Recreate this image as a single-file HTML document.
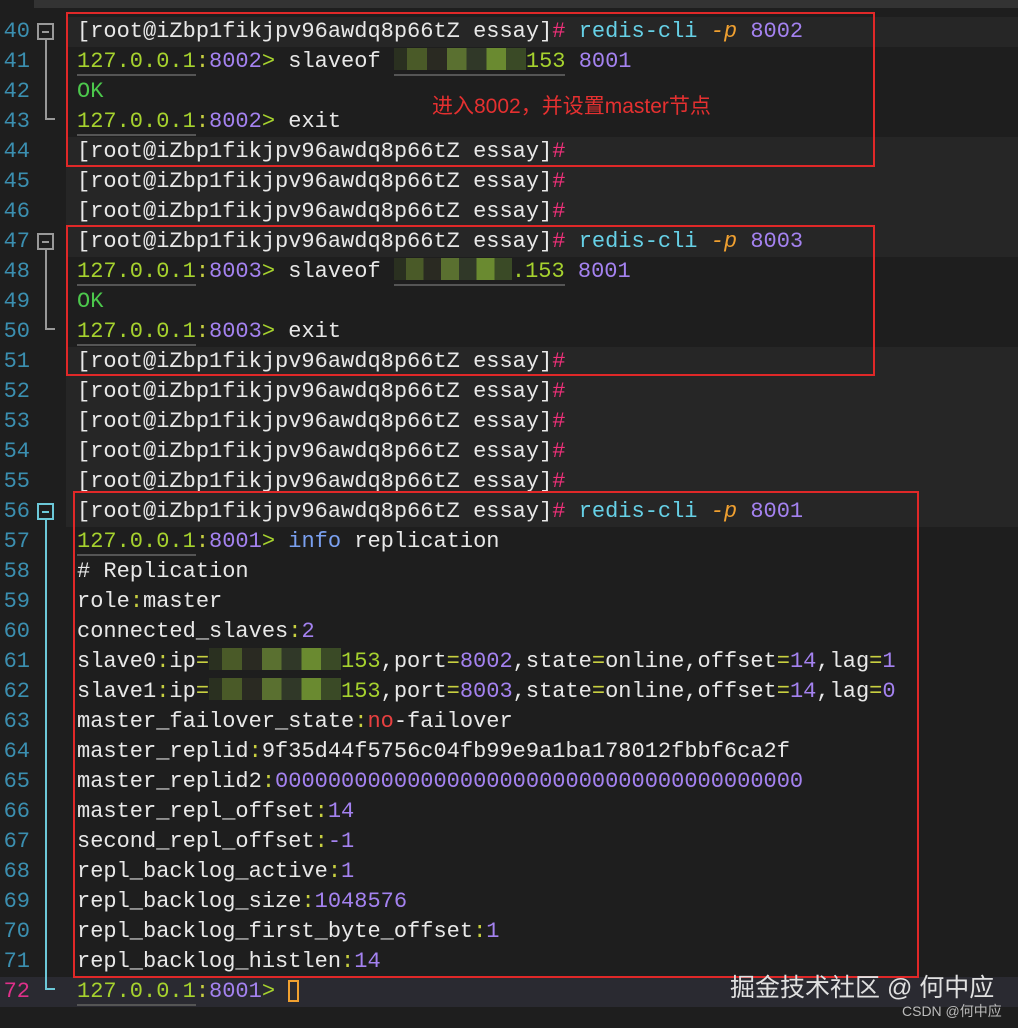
<!DOCTYPE html>
<html><head><meta charset="utf-8"><style>
html,body{margin:0;padding:0;background:#1e1e1e;width:1018px;height:1028px;overflow:hidden;position:relative;font-family:"Liberation Mono","DejaVu Sans Mono",monospace;}
.top{position:absolute;left:34px;top:0;width:984px;height:8px;background:#333;}
.ln{position:absolute;left:0;width:30px;text-align:right;font-size:22px;line-height:30px;color:#3b8fb0;}
.row{position:absolute;left:77px;font-size:22px;line-height:30px;color:#e8e8e8;white-space:pre;}
.hl{position:absolute;left:66px;width:952px;height:30px;background:#262626;}
.w{color:#e8e8e8}.g{color:#a6d22e}.p{color:#a482f0}.pk{color:#f0307a}.c{color:#66d0e6}.o{color:#f0a030;font-style:italic}.y{color:#c8d040}.b{color:#7aa0f0}.r{color:#e84040}
.ip{border-bottom:2px solid #555;}
.m{display:inline-block;height:22px;vertical-align:-3px;background:linear-gradient(90deg,#2a3020 0,#2a3020 10%,#4a5a28 10%,#4a5a28 25%,#2a2a22 25%,#2a2a22 40%,#5a7030 40%,#5a7030 55%,#303828 55%,#303828 70%,#6a8a30 70%,#6a8a30 85%,#3a4a26 85%);}
.box{position:absolute;border:2px solid #e02828;box-sizing:border-box;}
.fold{position:absolute;left:37px;width:17px;height:17px;box-sizing:border-box;border:2px solid #999;}
.fold::after{content:"";position:absolute;left:3px;top:6px;width:7px;height:2px;background:#999;}
.fold.cy{border-color:#6cc8d8}.fold.cy::after{background:#6cc8d8}
.vl{position:absolute;left:45px;width:2px;background:#999;}
.hk{position:absolute;left:45px;width:10px;height:2px;background:#999;}
</style></head><body>
<div class="top"></div>
<div class="hl" style="top:17px"></div>
<div class="hl" style="top:137px"></div>
<div class="hl" style="top:167px"></div>
<div class="hl" style="top:197px"></div>
<div class="hl" style="top:227px"></div>
<div class="hl" style="top:347px"></div>
<div class="hl" style="top:377px"></div>
<div class="hl" style="top:407px"></div>
<div class="hl" style="top:437px"></div>
<div class="hl" style="top:467px"></div>
<div class="hl" style="top:497px"></div>
<div style="position:absolute;left:0;top:977px;width:1018px;height:30px;background:#2a2a31"></div>

<div class="ln" style="top:17px">40</div><div class="ln" style="top:47px">41</div><div class="ln" style="top:77px">42</div><div class="ln" style="top:107px">43</div><div class="ln" style="top:137px">44</div><div class="ln" style="top:167px">45</div><div class="ln" style="top:197px">46</div><div class="ln" style="top:227px">47</div><div class="ln" style="top:257px">48</div><div class="ln" style="top:287px">49</div><div class="ln" style="top:317px">50</div><div class="ln" style="top:347px">51</div><div class="ln" style="top:377px">52</div><div class="ln" style="top:407px">53</div><div class="ln" style="top:437px">54</div><div class="ln" style="top:467px">55</div><div class="ln" style="top:497px">56</div><div class="ln" style="top:527px">57</div><div class="ln" style="top:557px">58</div><div class="ln" style="top:587px">59</div><div class="ln" style="top:617px">60</div><div class="ln" style="top:647px">61</div><div class="ln" style="top:677px">62</div><div class="ln" style="top:707px">63</div><div class="ln" style="top:737px">64</div><div class="ln" style="top:767px">65</div><div class="ln" style="top:797px">66</div><div class="ln" style="top:827px">67</div><div class="ln" style="top:857px">68</div><div class="ln" style="top:887px">69</div><div class="ln" style="top:917px">70</div><div class="ln" style="top:947px">71</div><div class="ln" style="top:977px;color:#e0308a">72</div>

<div class="fold" style="top:23px"></div><div class="vl" style="top:40px;height:80px"></div><div class="hk" style="top:118px"></div>
<div class="fold" style="top:233px"></div><div class="vl" style="top:250px;height:80px"></div><div class="hk" style="top:328px"></div>
<div class="fold cy" style="top:503px"></div><div class="vl" style="top:520px;height:470px;background:#6cc8d8"></div><div class="hk" style="top:988px;background:#6cc8d8"></div>

<div class="row" style="top:17px">[root@iZbp1fikjpv96awdq8p66tZ essay]<span class="pk">#</span> <span class="c">redis-cli</span> <span class="o">-p</span> <span class="p">8002</span></div>
<div class="row" style="top:47px"><span class="g ip">127.0.0.1</span><span class="y">:</span><span class="p">8002</span><span class="g">&gt;</span> slaveof <span class="ip"><span class="m" style="width:132px"></span><span class="g">153</span></span> <span class="p">8001</span></div>
<div class="row" style="top:77px"><span style="color:#4cc84c">OK</span></div>
<div class="row" style="top:107px"><span class="g ip">127.0.0.1</span><span class="y">:</span><span class="p">8002</span><span class="g">&gt;</span> exit</div>
<div class="row" style="top:137px">[root@iZbp1fikjpv96awdq8p66tZ essay]<span class="pk">#</span></div>
<div class="row" style="top:167px">[root@iZbp1fikjpv96awdq8p66tZ essay]<span class="pk">#</span></div>
<div class="row" style="top:197px">[root@iZbp1fikjpv96awdq8p66tZ essay]<span class="pk">#</span></div>
<div class="row" style="top:227px">[root@iZbp1fikjpv96awdq8p66tZ essay]<span class="pk">#</span> <span class="c">redis-cli</span> <span class="o">-p</span> <span class="p">8003</span></div>
<div class="row" style="top:257px"><span class="g ip">127.0.0.1</span><span class="y">:</span><span class="p">8003</span><span class="g">&gt;</span> slaveof <span class="ip"><span class="m" style="width:118px"></span><span class="g">.153</span></span> <span class="p">8001</span></div>
<div class="row" style="top:287px"><span style="color:#4cc84c">OK</span></div>
<div class="row" style="top:317px"><span class="g ip">127.0.0.1</span><span class="y">:</span><span class="p">8003</span><span class="g">&gt;</span> exit</div>
<div class="row" style="top:347px">[root@iZbp1fikjpv96awdq8p66tZ essay]<span class="pk">#</span></div>
<div class="row" style="top:377px">[root@iZbp1fikjpv96awdq8p66tZ essay]<span class="pk">#</span></div>
<div class="row" style="top:407px">[root@iZbp1fikjpv96awdq8p66tZ essay]<span class="pk">#</span></div>
<div class="row" style="top:437px">[root@iZbp1fikjpv96awdq8p66tZ essay]<span class="pk">#</span></div>
<div class="row" style="top:467px">[root@iZbp1fikjpv96awdq8p66tZ essay]<span class="pk">#</span></div>
<div class="row" style="top:497px">[root@iZbp1fikjpv96awdq8p66tZ essay]<span class="pk">#</span> <span class="c">redis-cli</span> <span class="o">-p</span> <span class="p">8001</span></div>
<div class="row" style="top:527px"><span class="g ip">127.0.0.1</span><span class="y">:</span><span class="p">8001</span><span class="g">&gt;</span> <span class="b">info</span> replication</div>
<div class="row" style="top:557px"># Replication</div>
<div class="row" style="top:587px">role<span class="y">:</span>master</div>
<div class="row" style="top:617px">connected_slaves<span class="y">:</span><span class="p">2</span></div>
<div class="row" style="top:647px">slave0<span class="y">:</span>ip<span class="y">=</span><span class="m" style="width:132px"></span><span class="g">153</span>,port<span class="y">=</span><span class="p">8002</span>,state<span class="y">=</span>online,offset<span class="y">=</span><span class="p">14</span>,lag<span class="y">=</span><span class="p">1</span></div>
<div class="row" style="top:677px">slave1<span class="y">:</span>ip<span class="y">=</span><span class="m" style="width:132px"></span><span class="g">153</span>,port<span class="y">=</span><span class="p">8003</span>,state<span class="y">=</span>online,offset<span class="y">=</span><span class="p">14</span>,lag<span class="y">=</span><span class="p">0</span></div>
<div class="row" style="top:707px">master_failover_state<span class="y">:</span><span class="r">no</span>-failover</div>
<div class="row" style="top:737px">master_replid<span class="y">:</span>9f35d44f5756c04fb99e9a1ba178012fbbf6ca2f</div>
<div class="row" style="top:767px">master_replid2<span class="y">:</span><span class="p">0000000000000000000000000000000000000000</span></div>
<div class="row" style="top:797px">master_repl_offset<span class="y">:</span><span class="p">14</span></div>
<div class="row" style="top:827px">second_repl_offset<span class="y">:</span><span class="p">-1</span></div>
<div class="row" style="top:857px">repl_backlog_active<span class="y">:</span><span class="p">1</span></div>
<div class="row" style="top:887px">repl_backlog_size<span class="y">:</span><span class="p">1048576</span></div>
<div class="row" style="top:917px">repl_backlog_first_byte_offset<span class="y">:</span><span class="p">1</span></div>
<div class="row" style="top:947px">repl_backlog_histlen<span class="y">:</span><span class="p">14</span></div>
<div class="row" style="top:977px"><span class="g ip">127.0.0.1</span><span class="y">:</span><span class="p">8001</span><span class="g">&gt;</span> <span style="display:inline-block;width:11px;height:22px;border:2px solid #f0a030;vertical-align:-5px;box-sizing:border-box"></span></div>

<div class="box" style="left:66px;top:12px;width:809px;height:155px"></div>
<div class="box" style="left:66px;top:225px;width:809px;height:151px"></div>
<div class="box" style="left:73px;top:491px;width:846px;height:487px"></div>

<div style="position:absolute;left:432px;top:90px;font-family:'Liberation Sans','Noto Sans CJK SC',sans-serif;font-size:21px;color:#e53030;white-space:nowrap">进入8002，并设置master节点</div>
<div style="position:absolute;left:730px;top:968px;font-family:'Liberation Sans','Noto Sans CJK SC',sans-serif;font-size:25px;color:#e0e0e0;white-space:nowrap">掘金技术社区 @ 何中应</div>
<div style="position:absolute;left:902px;top:1001px;font-family:'Liberation Sans','Noto Sans CJK SC',sans-serif;font-size:14px;color:#bbb;white-space:nowrap">CSDN @何中应</div>
</body></html>
